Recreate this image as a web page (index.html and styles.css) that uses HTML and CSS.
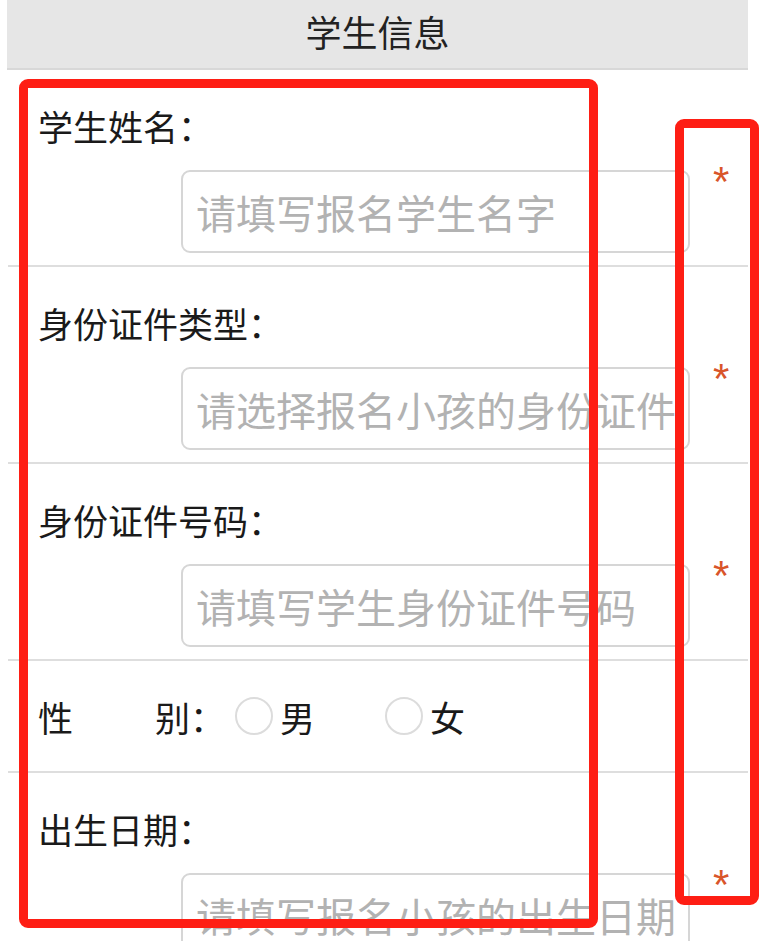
FILE: index.html
```html
<!DOCTYPE html>
<html lang="zh-CN">
<head>
<meta charset="utf-8">
<title>学生信息</title>
<link rel="stylesheet" href="styles.css">
</head>
<body>
<div class="page">
  <header class="header"><h1 class="title">学生信息</h1></header>
  <div class="form">
    <div class="row">
      <div class="label">学生姓名：</div>
      <div class="field">
        <input class="input" type="text" placeholder="请填写报名学生名字">
        <span class="req">*</span>
      </div>
    </div>
    <div class="row">
      <div class="label">身份证件类型：</div>
      <div class="field">
        <input class="input" type="text" placeholder="请选择报名小孩的身份证件类型">
        <span class="req">*</span>
      </div>
    </div>
    <div class="row">
      <div class="label">身份证件号码：</div>
      <div class="field">
        <input class="input" type="text" placeholder="请填写学生身份证件号码">
        <span class="req">*</span>
      </div>
    </div>
    <div class="row row-gender">
      <span class="g-first">性</span><span class="g-second">别：</span>
      <label class="radio"><span class="circle"></span><span class="opt">男</span></label>
      <label class="radio radio-2"><span class="circle"></span><span class="opt">女</span></label>
    </div>
    <div class="row">
      <div class="label">出生日期：</div>
      <div class="field">
        <input class="input" type="text" placeholder="请填写报名小孩的出生日期">
        <span class="req">*</span>
      </div>
    </div>
  </div>
  <div class="mark mark-left"></div>
  <div class="mark mark-right"></div>
</div>
</body>
</html>
```
FILE: styles.css
```css
* { box-sizing: border-box; }
html, body { margin: 0; padding: 0; background: #fff; }
body {
  font-family: "Noto Sans CJK SC", "Noto Sans", sans-serif;
  color: #1a1a1a;
  overflow: hidden;
  height: 941px;
}
.page { position: relative; width: 767px; }
.header {
  margin: 0 19px 0 7px;
  height: 70px;
  background: #e6e6e6;
  border-bottom: 2px solid #d8d8d8;
}
.title {
  margin: 0;
  font-size: 36px;
  font-weight: 400;
  line-height: 62px;
  text-align: center;
  color: #222;
}
.form { margin: 0 19px 0 8px; }
.row {
  border-bottom: 2px solid #dedede;
  padding: 36px 0 12px 30px;
}
.label {
  font-size: 35px;
  line-height: 40px;
  height: 40px;
}
.field {
  display: flex;
  align-items: flex-start;
  margin-top: 24px;
  padding-left: 143px;
}
.input {
  width: 509px;
  height: 83px;
  border: 2px solid #d6d6d6;
  border-radius: 9px;
  padding: 0 10px 0 13px;
  font-family: "Noto Sans CJK SC", sans-serif;
  font-size: 40px;
  color: #333;
  background: #fff;
  outline: none;
}
.input::placeholder { color: #b2b2b2; }
.req {
  margin-left: 23px;
  margin-top: -9px;
  font-family: "Liberation Sans", sans-serif;
  font-size: 42px;
  line-height: 42px;
  color: #d9552a;
}
.row-gender {
  display: flex;
  align-items: center;
  height: 112px;
  padding: 0 0 0 30px;
  font-size: 35px;
}
.g-second { margin-left: 82px; }
.radio { display: flex; align-items: center; margin-left: 10px; }
.radio-2 { margin-left: 70px; }
.circle {
  width: 38px;
  height: 38px;
  border: 2px solid #dcdcdc;
  border-radius: 50%;
  background: #fff;
}
.opt { margin-left: 7px; }
.mark {
  position: absolute;
  border: 9px solid #fe1e14;
  border-radius: 9px;
  pointer-events: none;
}
.mark-left { left: 19px; top: 79px; width: 579px; height: 849px; }
.mark-right { left: 675px; top: 119px; width: 84px; height: 786px; }
```
